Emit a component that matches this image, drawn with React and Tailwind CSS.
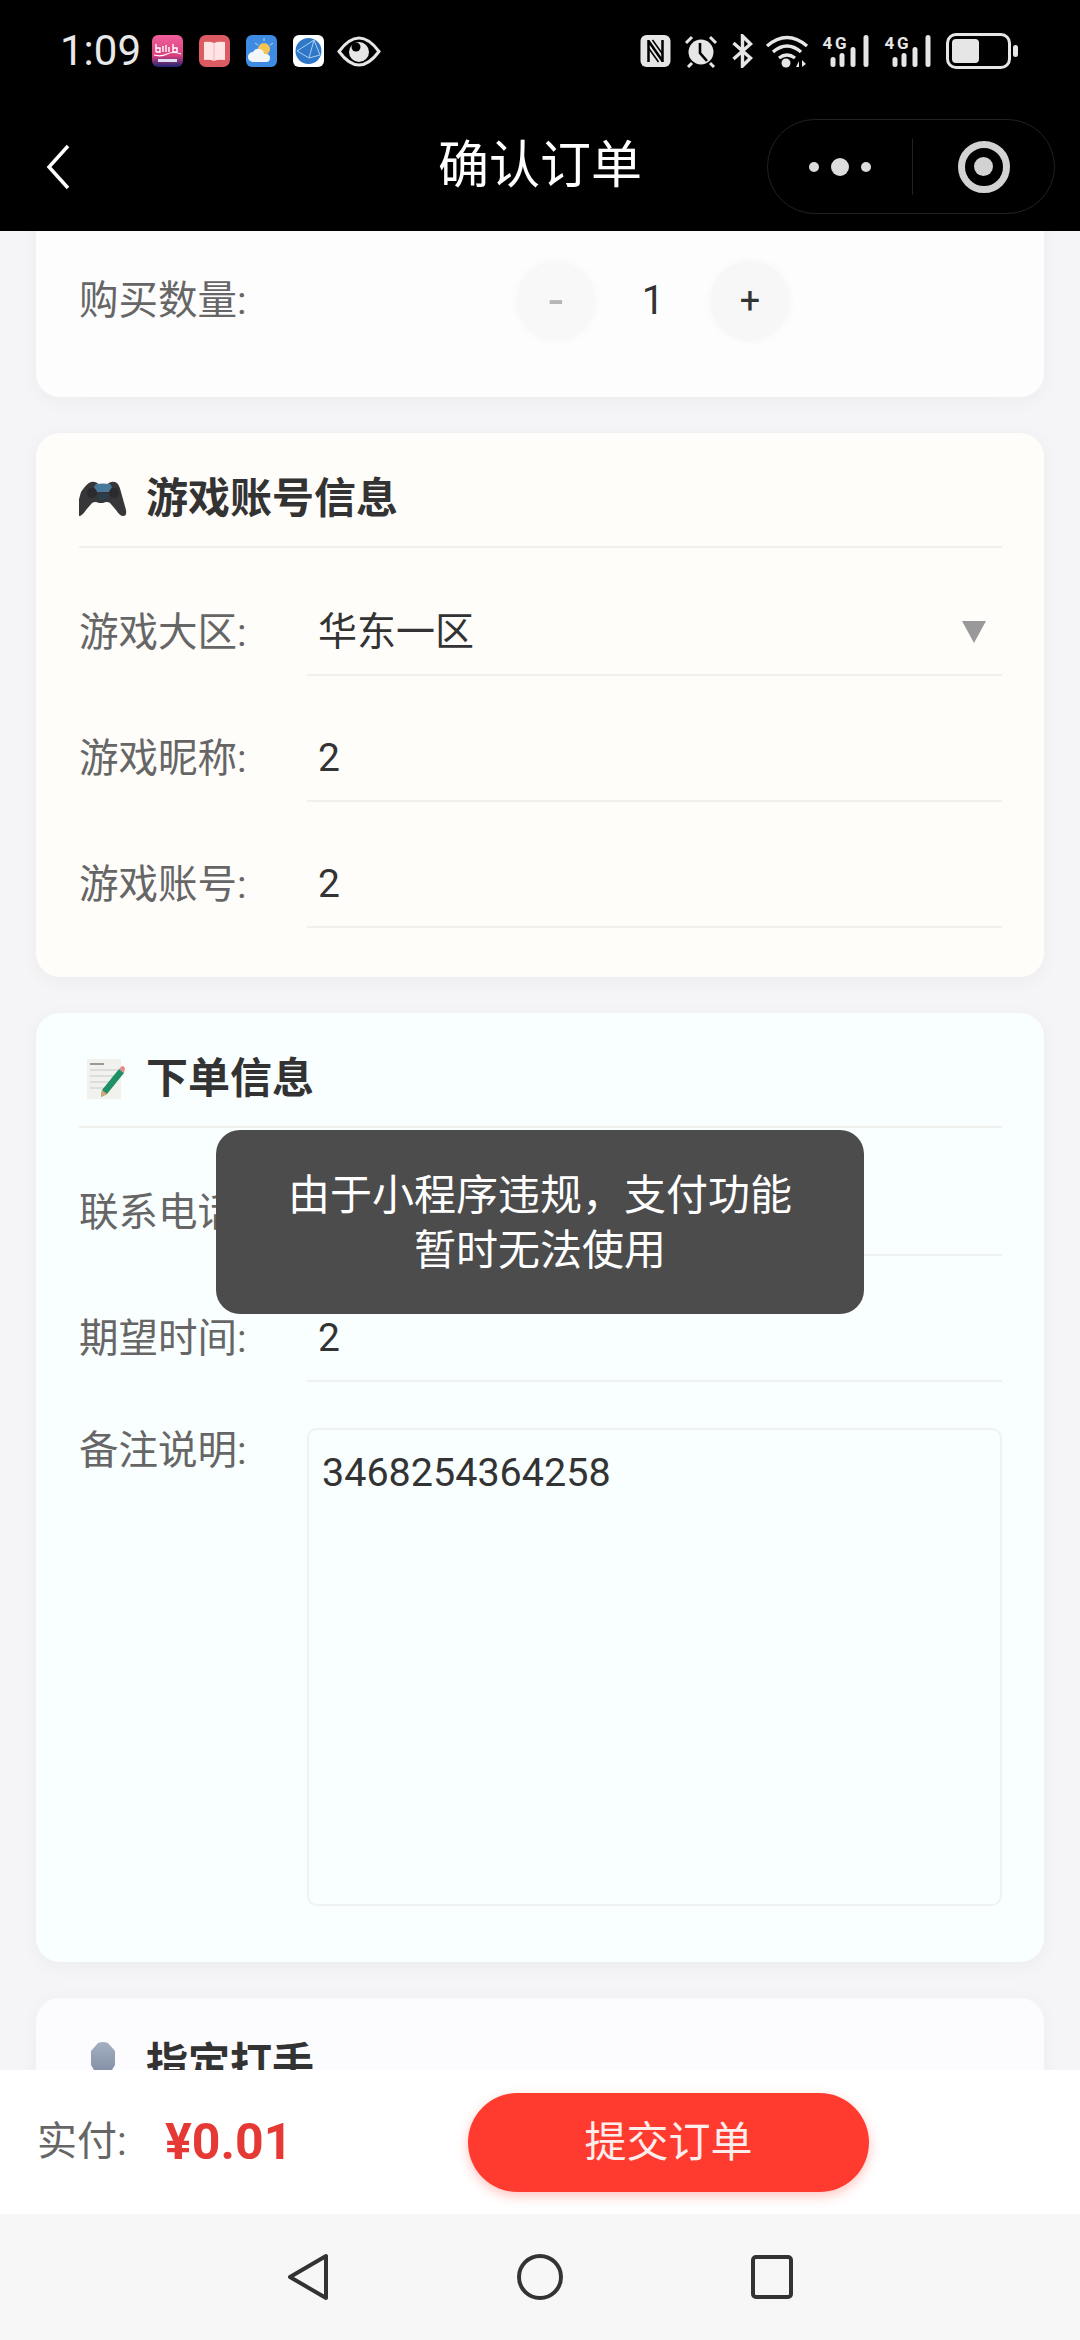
import React from "react";

const CJK = "font-['Roboto','Noto_Sans_CJK_SC',sans-serif]";

function AppIcons() {
  return (
    <div className="flex items-center ml-[14px]">
      <svg width="31" height="32" viewBox="0 0 31 32" className="shrink-0">
        <defs>
          <linearGradient id="pk" x1="0" y1="0" x2="0" y2="1">
            <stop offset="0" stopColor="#f0609a" />
            <stop offset="0.65" stopColor="#d93f7f" />
            <stop offset="1" stopColor="#1c2470" />
          </linearGradient>
        </defs>
        <rect width="31" height="32" rx="6" fill="url(#pk)" />
        <path d="M4 17V9M4 13h4v4H4M11 17v-6M14 17v-7M17 17v-5M21 17V9M21 13h4v4h-4" stroke="#fff" strokeWidth="1.4" fill="none" />
        <path d="M2 20q7 2 13-1t14 0" stroke="#fff" strokeWidth="1.2" fill="none" />
        <rect x="6" y="24" width="19" height="3" fill="#dfe0f5" />
      </svg>
      <svg width="31" height="32" viewBox="0 0 31 32" className="shrink-0 ml-[16px]">
        <rect width="31" height="32" rx="7" fill="#dc5b63" />
        <path d="M5 7q6-1 10 1q4-2 11-1v18q-7-1-11 1q-4-2-10-1z" fill="#ffe4e6" />
        <path d="M15 8v18" stroke="#f3b6bb" strokeWidth="1" />
      </svg>
      <svg width="31" height="32" viewBox="0 0 31 32" className="shrink-0 ml-[16px]">
        <rect width="31" height="32" rx="6" fill="#3e8be4" />
        <circle cx="18" cy="14" r="6" fill="#f3c552" />
        <path d="M18 3v3M27 8l-3 2M9 8l3 2" stroke="#b9d8ef" strokeWidth="1" />
        <path d="M7 27a5 5 0 0 1 0-10q2-4 7-3q4 1 4 5h2a4 4 0 0 1 0 8z" fill="#f3f7fa" />
      </svg>
      <svg width="31" height="32" viewBox="0 0 31 32" className="shrink-0 ml-[16px]">
        <rect width="31" height="32" rx="6" fill="#fff" />
        <circle cx="15.5" cy="16" r="13" fill="#2f78c9" />
        <path d="M4 16L21 5M4 16l12 7 11-3M21 5l-5 18M21 5l6 15" stroke="#a9d0f0" strokeWidth="1" fill="none" />
      </svg>
      <svg width="46" height="31" viewBox="0 0 44 31" className="shrink-0 ml-[12px]">
        <path d="M2 15.5Q12 2 22 2t20 13.5Q32 29 22 29T2 15.5z" fill="none" stroke="#e6e6e6" strokeWidth="3" />
        <circle cx="22" cy="16" r="10" fill="#e6e6e6" />
        <circle cx="19" cy="11" r="4.5" fill="#000" />
      </svg>
    </div>
  );
}

function Cell4G() {
  return (
    <svg width="49" height="34" viewBox="0 0 48 34" className="shrink-0">
      <text x="0" y="15" fontSize="17" fontWeight="700" fill="#e6e6e6" fontFamily="Roboto, sans-serif" textLength="24">4G</text>
      <rect x="8" y="23" width="5" height="10" rx="2.5" fill="#e6e6e6" />
      <rect x="17" y="19" width="5" height="14" rx="2.5" fill="#e6e6e6" />
      <rect x="28" y="13" width="5" height="20" rx="2.5" fill="#e6e6e6" />
      <rect x="41" y="1" width="5" height="32" rx="2.5" fill="#e6e6e6" />
    </svg>
  );
}

function StatusIcons() {
  return (
    <div className="flex items-center">
      <svg width="31" height="32" viewBox="0 0 30 32" className="shrink-0">
        <rect width="30" height="32" rx="6" fill="#e6e6e6" />
        <path d="M8 5v22M22 5v22M8 6l14 20" stroke="#000" strokeWidth="2.5" fill="none" />
        <path d="M12 5l10 14M8 13l10 14" stroke="#000" strokeWidth="1.6" fill="none" />
      </svg>
      <svg width="36" height="34" viewBox="0 0 34 34" className="shrink-0 ml-[12px]">
        <circle cx="17" cy="18" r="12.5" fill="#e6e6e6" />
        <path d="M16 9v10l7 8" stroke="#000" strokeWidth="2.6" fill="none" />
        <path d="M2 9l6-6M32 9l-6-6M8 29l-4 4M26 29l4 4" stroke="#e6e6e6" strokeWidth="3" />
      </svg>
      <svg width="22" height="34" viewBox="0 0 21 34" className="shrink-0 ml-[12px]">
        <path d="M2 9l17 15-8 8V2l8 8L2 25" fill="none" stroke="#e6e6e6" strokeWidth="3.4" />
      </svg>
      <svg width="44" height="34" viewBox="0 0 42 34" className="shrink-0 ml-[12px]">
        <path d="M1 12q20-17 40 0M7 18q14-12 28 0M13 24q8-6 16 0" fill="none" stroke="#e6e6e6" strokeWidth="3.4" />
        <circle cx="20" cy="29" r="4.5" fill="#e6e6e6" />
        <path d="M30 33l3-6v6zM36 26v7l4-3z" fill="#e6e6e6" />
      </svg>
      <div className="ml-[13px]"><Cell4G /></div>
      <div className="ml-[13px]"><Cell4G /></div>
      <div className="ml-[13px] w-[65px] h-[36px] rounded-[10px] border-[3px] border-[#e6e6e6] p-[3px]">
        <div className="w-[27px] h-full rounded-[4px] bg-[#e6e6e6]" />
      </div>
      <div className="ml-[2px] w-[5px] h-[12px] rounded-full bg-[#e6e6e6]" />
    </div>
  );
}

function GameIcon() {
  return (
    <svg width="48" height="36" viewBox="0 0 48 36" className="shrink-0">
      <path d="M12 1q5-1 8 3h8q3-4 8-3q4 1 6 10l5 18q1 6-3 6q-3 0-7-6l-6-7q-3-2-7 0h-4q-4-2-7 0l-6 7q-4 6-7 6q-4 0-3-6l5-18Q8 2 12 1z" fill="#37373a" />
      <path d="M17 3q7-1 14 0l2 3-3 5H18l-3-5z" fill="#48799b" />
      <circle cx="13" cy="12" r="5" fill="#2b2b2d" />
      <circle cx="35" cy="12" r="5" fill="#2b2b2d" />
      <path d="M18 13h12l-3 6h-6z" fill="#2a3f4d" />
    </svg>
  );
}

function MemoIcon() {
  return (
    <svg width="48" height="40" viewBox="0 0 48 40" className="shrink-0">
      <rect x="8" y="0" width="34" height="40" fill="#f1f1ee" />
      <rect x="11" y="4" width="14" height="2" fill="#9a9a9a" />
      <path d="M11 11h28M11 17h26M11 23h20M11 29h14" stroke="#d4d8d8" strokeWidth="1.5" />
      <path d="M40 10l5 4-17 21-6 3 1-7z" fill="#1f8f66" />
      <path d="M40 10l3-3q2 0 3 2l-1 5z" fill="#e38b8b" />
      <path d="M23 31l5 4-6 3z" fill="#d9a777" />
    </svg>
  );
}

function PersonIcon() {
  return (
    <svg width="48" height="44" viewBox="0 0 48 44" className="shrink-0">
      <defs>
        <linearGradient id="bust" x1="0" y1="0" x2="0" y2="1">
          <stop offset="0" stopColor="#a4afc2" />
          <stop offset="1" stopColor="#75829a" />
        </linearGradient>
      </defs>
      <path d="M19 1q5-2 10 0l7 8v14l-6 10v10H18V33l-6-10V9z" fill="url(#bust)" />
    </svg>
  );
}

function CardTitle({ icon, children }) {
  return (
    <div className="h-[115px] pt-[18px] border-b-2 border-[#f0f0ee] flex items-center gap-[19px]">
      {icon}
      <span className="text-[42px] font-bold text-[#333]">{children}</span>
    </div>
  );
}

function Row({ label, value, line = "border-[#f0f0ee]", children, first }) {
  return (
    <div className={`flex items-center ${first ? "mt-[42px]" : "mt-[40px]"}`}>
      <span className="w-[228px] shrink-0 text-[39.5px] text-[#666]">{label}</span>
      <div className={`flex-1 h-[86px] border-b-2 ${line} pl-[11px] pr-[16px] flex items-center justify-between text-[39px] text-[#333]`}>
        <span>{value}</span>
        {children}
      </div>
    </div>
  );
}

export default function App() {
  return (
    <div className={`relative h-[2340px] w-[1080px] overflow-hidden flex flex-col bg-[#f5f5f7] ${CJK}`}>
      {/* status bar */}
      <div className="h-[102px] shrink-0 bg-black flex items-center justify-between pl-[60px] pr-[62px]">
        <div className="flex items-center">
          <span className="text-[42px] leading-none text-[#e8e8e8] w-[78px]">1:09</span>
          <AppIcons />
        </div>
        <StatusIcons />
      </div>

      {/* nav */}
      <div className="h-[129px] shrink-0 bg-black grid grid-cols-[1fr_auto_1fr] items-center">
        <div className="pl-[46px]">
          <svg width="24" height="46" viewBox="0 0 24 46">
            <path d="M22 2L3 23l19 21" fill="none" stroke="#fff" strokeWidth="3.5" />
          </svg>
        </div>
        <span className="text-[51px] text-white">确认订单</span>
        <div className="flex justify-end pr-[25px]">
          <div className="w-[288px] h-[95px] rounded-full border border-[#222] flex items-center">
            <div className="w-[144px] flex items-center justify-center gap-[12px]">
              <span className="w-[10px] h-[10px] rounded-full bg-[#ddd]" />
              <span className="w-[18px] h-[18px] rounded-full bg-[#ddd]" />
              <span className="w-[10px] h-[10px] rounded-full bg-[#ddd]" />
            </div>
            <div className="w-px h-[56px] bg-[#222]" />
            <div className="flex-1 flex items-center justify-center">
              <div className="w-[52px] h-[52px] rounded-full border-[7px] border-[#d2d2d2] flex items-center justify-center">
                <div className="w-[19px] h-[19px] rounded-full bg-[#d2d2d2]" />
              </div>
            </div>
          </div>
        </div>
      </div>

      {/* scrolled content */}
      <div className="flex-1 min-h-0 overflow-hidden px-[36px] flex flex-col gap-[36px]">
        <div className="-mt-[40px] shrink-0 bg-[#fdfdfd] rounded-[24px] shadow-[0_4px_20px_rgba(0,0,0,0.04)] pt-[70px] pb-[56px] pl-[43px] pr-[42px] flex items-center">
          <span className="w-[437px] text-[39.5px] text-[#666]">购买数量:</span>
          <div className="w-[80px] h-[80px] rounded-full bg-[#f8f8f8] shadow-[0_0_8px_#f8f8f8] flex items-center justify-center text-[52px] leading-none text-[#b5b5b5]">-</div>
          <span className="w-[114px] text-center text-[40px] text-[#333]">1</span>
          <div className="w-[80px] h-[80px] rounded-full bg-[#f7f7f7] shadow-[0_0_8px_#f7f7f7] flex items-center justify-center text-[36px] text-[#333]">+</div>
        </div>

        <div className="shrink-0 bg-[#fffdfa] rounded-[24px] shadow-[0_4px_20px_rgba(0,0,0,0.04)] pl-[43px] pr-[42px] pb-[49px]">
          <CardTitle icon={<GameIcon />}>游戏账号信息</CardTitle>
          <Row first label="游戏大区:" value="华东一区">
            <svg width="24" height="22" viewBox="0 0 24 22" className="shrink-0">
              <path d="M0 0h24L12 22z" fill="#999" />
            </svg>
          </Row>
          <Row label="游戏昵称:" value="2" />
          <Row label="游戏账号:" value="2" />
        </div>

        <div className="shrink-0 bg-[#f9fefe] rounded-[24px] shadow-[0_4px_20px_rgba(0,0,0,0.04)] pl-[43px] pr-[42px] pb-[56px]">
          <CardTitle icon={<MemoIcon />}>下单信息</CardTitle>
          <Row first label="联系电话:" value="" line="border-[#eef2f2]" />
          <Row label="期望时间:" value="2" line="border-[#eef2f2]" />
          <div className="flex mt-[46px]">
            <span className="w-[228px] shrink-0 pt-[4px] text-[39.5px] text-[#666] leading-[38px]">备注说明:</span>
            <div className="flex-1 h-[478px] rounded-[10px] border-2 border-[#eef2f2] px-[13px] pt-[19px] text-[39.5px] leading-[48px] text-[#333]">
              3468254364258
            </div>
          </div>
        </div>

        <div className="shrink-0 bg-[#fcfbfd] rounded-[24px] shadow-[0_4px_20px_rgba(0,0,0,0.04)] pl-[43px] pr-[42px] pb-[50px]">
          <CardTitle icon={<PersonIcon />}>指定打手</CardTitle>
        </div>
      </div>

      {/* footer */}
      <div className="h-[144px] shrink-0 bg-white flex items-center pl-[37px]">
        <span className="w-[128px] text-[40px] text-[#666]">实付:</span>
        <span className="w-[303px] text-[50px] font-bold text-[#e53935]">¥0.01</span>
        <div className="w-[401px] h-[99px] rounded-full bg-[#ff3b30] shadow-[0_4px_12px_rgba(255,59,48,0.3)] flex items-center justify-center text-[42px] text-[#fdeeee]">
          提交订单
        </div>
      </div>

      {/* android nav */}
      <div className="h-[126px] shrink-0 bg-[#f7f7f7] flex items-center justify-center gap-[188px]">
        <svg width="42" height="48" viewBox="0 0 42 48" className="shrink-0">
          <path d="M39 3v42L3 24z" fill="none" stroke="#333" strokeWidth="4" strokeLinejoin="round" />
        </svg>
        <svg width="46" height="48" viewBox="0 0 46 48" className="shrink-0">
          <circle cx="23" cy="24" r="21" fill="none" stroke="#333" strokeWidth="4" />
        </svg>
        <svg width="42" height="44" viewBox="0 0 42 44" className="shrink-0">
          <rect x="2" y="2" width="38" height="40" rx="3" fill="none" stroke="#333" strokeWidth="4" />
        </svg>
      </div>

      {/* toast */}
      <div className="absolute left-[216px] top-[1130px] w-[648px] h-[184px] rounded-[24px] bg-[#4c4c4c] flex items-center justify-center text-center text-[42px] leading-[55px] text-white pt-[2px] px-[60px]">
        由于小程序违规，支付功能暂时无法使用
      </div>
    </div>
  );
}
